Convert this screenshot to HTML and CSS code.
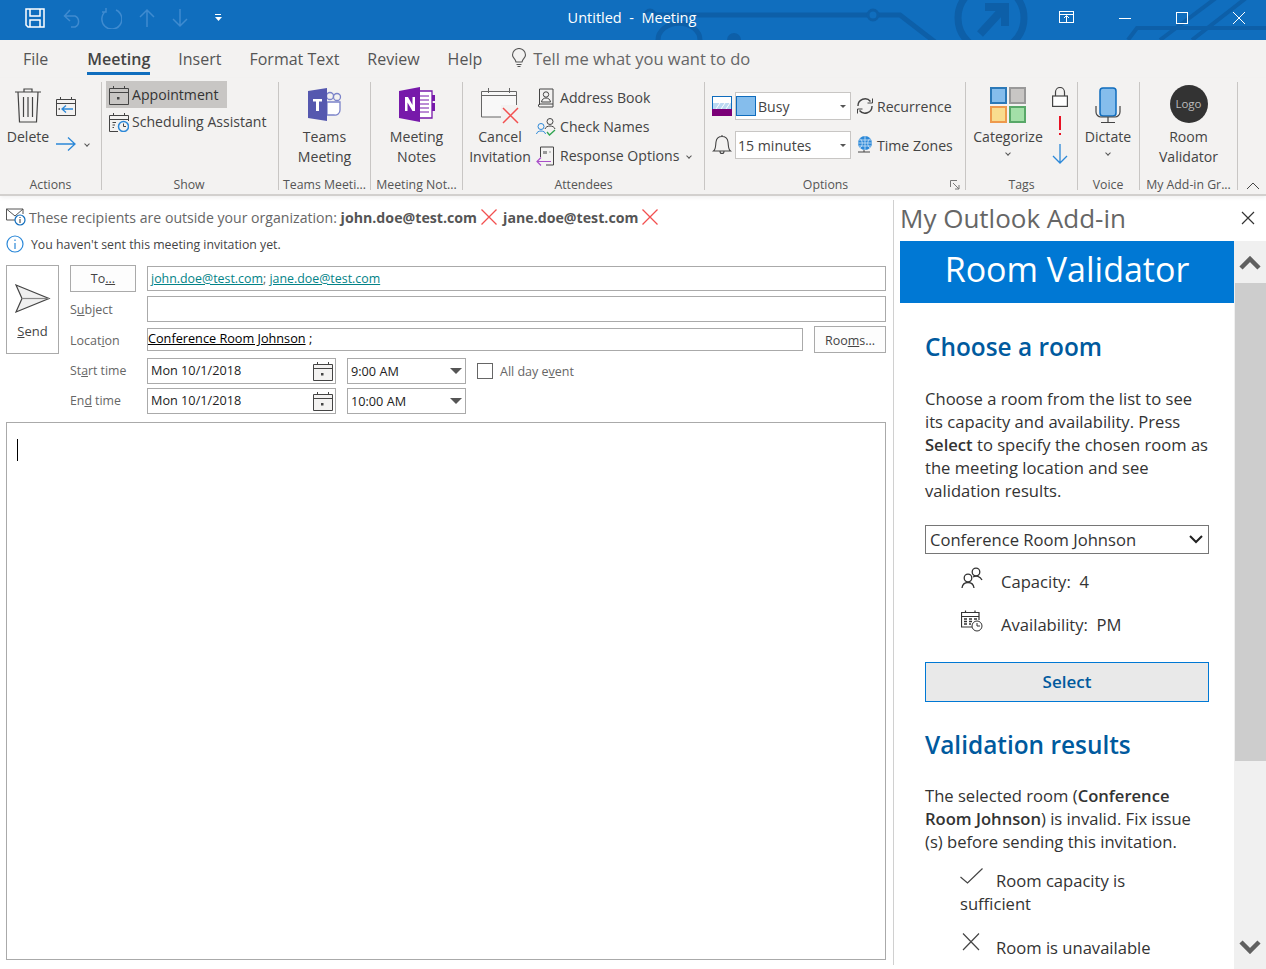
FILE: index.html
```html
<!DOCTYPE html>
<html lang="en">
<head>
    <meta charset="UTF-8">
    <title>Untitled - Meeting</title>
    <link rel="stylesheet" href="styles.css">
</head>
<body>
    <div class="titlebar">
        <svg class="circuit" width="1266" height="40" viewBox="0 0 1266 40" fill="none" stroke="#0d5fa8" stroke-width="5">
            <path d="M655 15H868M878 15H900L935 42"/>
            <circle cx="873" cy="15" r="5" stroke-width="3"/>
            <circle cx="650" cy="15" r="5" stroke-width="3"/>
            <path d="M658 40a20 16 0 0 1 42 0"/>
            <circle cx="734" cy="40" r="7" fill="#0d5fa8" stroke="none"/>
            <circle cx="991" cy="18" r="33" stroke-width="7"/>
            <path d="M980 34L1003 9M985 7H1005V26" stroke-width="8"/>
            <path d="M1128 40L1137 28H1266M1160 40L1220 -5M1192 40L1250 -5" stroke-width="4"/>
        </svg>
        <div class="qat">
            <svg width="22" height="22" viewBox="0 0 22 22" fill="none" stroke="#fff" stroke-width="1.5"><path d="M2 2H20V20H4L2 18Z"/><path d="M6 2V9H16V2M6 20V13H16V20"/></svg>
            <svg class="dim" width="20" height="20" viewBox="0 0 20 20" fill="none" stroke="#3f8bd0" stroke-width="1.5"><path d="M2 8H12A6 6 0 0 1 12 19H8M7 2L1.500 8L7 13"/></svg>
            <svg class="dim" width="22" height="22" viewBox="0 0 22 22" fill="none" stroke="#3f8bd0" stroke-width="1.5"><path d="M6 4A10 10 0 1 0 16 3M6 1V5H2"/></svg>
            <svg class="dim" width="16" height="20" viewBox="0 0 16 20" fill="none" stroke="#3f8bd0" stroke-width="1.500"><path d="M8 19V2M1 9L8 2L15 9"/></svg>
            <svg class="dim" width="16" height="20" viewBox="0 0 16 20" fill="none" stroke="#3f8bd0" stroke-width="1.500"><path d="M8 1V18M1 11L8 18L15 11"/></svg>
            <svg class="qat-more" width="8" height="8" viewBox="0 0 8 8" fill="#fff"><rect y="0" width="6" height="1"/><path d="M0 3H7L3.500 7Z"/></svg>
        </div>
        <div class="title">Untitled&nbsp; -&nbsp; Meeting</div>
        <div class="winctl">
            <svg width="16" height="14" viewBox="0 0 16 14" fill="none" stroke="#fff"><rect x=".5" y=".5" width="14" height="11"/><path d="M1 3.500H14M7.500 11V5M5 7L7.500 4.500L10 7"/></svg>
            <svg width="14" height="14" viewBox="0 0 14 14" fill="none" stroke="#fff"><path d="M1 7.500H13"/></svg>
            <svg width="14" height="14" viewBox="0 0 14 14" fill="none" stroke="#fff"><rect x="1.500" y="1.500" width="11" height="11"/></svg>
            <svg width="14" height="14" viewBox="0 0 14 14" fill="none" stroke="#fff"><path d="M1 1L13 13M13 1L1 13"/></svg>
        </div>
    </div>

    <div class="tabs">
        <span class="tab">File</span>
        <span class="tab active">Meeting</span>
        <span class="tab">Insert</span>
        <span class="tab">Format Text</span>
        <span class="tab">Review</span>
        <span class="tab">Help</span>
        <span class="tellme">
            <svg width="16" height="20" viewBox="0 0 16 20" fill="none" stroke="#555" stroke-width="1.100"><path d="M5 14C4 10 1.500 10 1.500 7A6.500 6.500 0 0 1 14.500 7C14.500 10 12 10 11 14ZM5.500 16.500H10.500M6.500 18.500H9.500"/></svg>
            Tell me what you want to do
        </span>
    </div>

    <div class="ribbon">
        <div class="group g-actions">
            <div class="group-body">
                <div class="big w-delete">
                    <div class="big-icon">
                        <svg width="28" height="36" viewBox="0 0 28 36" fill="none" stroke="#444" stroke-width="1.200"><path d="M1 5H27M10 5V2H18V5M4 5L5.500 35H22.500L24 5M9.500 10V30M14 10V30M18.500 10V30"/></svg>
                    </div>
                    <div class="big-text">Delete</div>
                </div>
                <div class="action-col">
                    <svg width="20" height="20" viewBox="0 0 20 20" fill="none" stroke="#444"><path d="M.500 3.500H19.500V19.500H.500ZM.500 7.500H19.500M4.500 1V4M15.500 1V4"/><path d="M17 13H6M10 9.500L6 13L10 16.500" stroke="#2b88d8" stroke-width="1.300"/><path d="M2.500 13H4" stroke-width="1.500"/></svg>
                    <div class="action-move">
                        <svg width="20" height="14" viewBox="0 0 20 14" fill="none" stroke="#2b88d8" stroke-width="1.300"><path d="M0 7H19M12 .5L19 7L12 13.500"/></svg>
                        <span class="chev"></span>
                    </div>
                </div>
            </div>
            <div class="group-label">Actions</div>
        </div>

        <div class="group g-show">
            <div class="group-body stack">
                <div class="small selected">
                    <svg width="20" height="20" viewBox="0 0 20 20" fill="none" stroke="#444"><path d="M.500 3.500H19.500V19.500H.500ZM.500 7.500H19.500M4.500 1V4M15.500 1V4"/><rect x="8" y="12" width="2.500" height="2.500" fill="#444" stroke="none"/></svg>
                    Appointment
                </div>
                <div class="small">
                    <svg width="20" height="20" viewBox="0 0 20 20" fill="none" stroke="#444"><path d="M9 19.500H.500V3.500H19.500V9M.500 7.500H19.500M4.500 1V4M15.500 1V4M3.500 10.500H7M3.500 13H6M3.500 15.500H5"/><circle cx="14.500" cy="14.500" r="5" fill="#f3f2f1" stroke="#2b88d8" stroke-width="1.500"/><path d="M14.500 11.500V14.500H17" stroke="#444"/></svg>
                    Scheduling Assistant
                </div>
            </div>
            <div class="group-label">Show</div>
        </div>

        <div class="group g-teams">
            <div class="group-body">
                <div class="big">
                    <div class="big-icon">
                        <svg width="34" height="33" viewBox="0 0 34 33" fill="none"><circle cx="22" cy="8" r="3.500" stroke="#7b83c9" stroke-width="1.300"/><circle cx="29" cy="9" r="3.500" stroke="#7b83c9" stroke-width="1.300"/><path d="M19 14H32V22A5 5 0 0 1 26 27H19Z" fill="#fff" stroke="#7b83c9" stroke-width="1.300"/><path d="M0 3L19 0V33L0 30Z" fill="#5558af"/><path d="M5 11H14V13.500H11V23H8V13.500H5Z" fill="#fff"/></svg>
                    </div>
                    <div class="big-text">Teams<br>Meeting</div>
                </div>
            </div>
            <div class="group-label">Teams Meeti...</div>
        </div>

        <div class="group g-notes">
            <div class="group-body">
                <div class="big">
                    <div class="big-icon">
                        <svg width="36" height="35" viewBox="0 0 36 35" fill="none"><path d="M20 4H33V31H20" fill="#fff" stroke="#7719aa" stroke-width="1.300"/><path d="M20 9H30M20 13H30M20 17H30M20 21H30M20 25H30" stroke="#7719aa"/><path d="M33 8H36V14H33ZM33 16H36V24H33Z" fill="#7719aa"/><path d="M0 4L21 0V35L0 31Z" fill="#7719aa"/><path d="M6 10H9L13.500 18V10H16V24H13.500L8.500 15.500V24H6Z" fill="#fff"/></svg>
                    </div>
                    <div class="big-text">Meeting<br>Notes</div>
                </div>
            </div>
            <div class="group-label">Meeting Not...</div>
        </div>

        <div class="group g-attendees">
            <div class="group-body">
                <div class="big w-cancel">
                    <div class="big-icon">
                        <svg width="38" height="38" viewBox="0 0 38 38" fill="none"><path d="M.500 5.500H35.500V31H.500Z" fill="#f8f8f8" stroke="#666"/><path d="M.500 9.500H35.500M7.500 2V7M28.500 2V7" stroke="#666"/><rect x="20" y="19" width="18" height="18" fill="#f3f2f1"/><path d="M22 22L37 37M37 22L22 37" stroke="#f25050" stroke-width="1.500"/></svg>
                    </div>
                    <div class="big-text">Cancel<br>Invitation</div>
                </div>
                <div class="small-col">
                    <div class="small tall">
                        <svg width="18" height="20" viewBox="0 0 18 20" fill="none" stroke="#444"><path d="M2.500 17V1H16V19H3.500A1.500 1.500 0 0 1 2.500 16H16"/><circle cx="9" cy="6.500" r="2.700"/><path d="M4.500 14C5 11 7 10 9 10C11 10 13 11 13.500 14Z"/></svg>
                        Address Book
                    </div>
                    <div class="small tall">
                        <svg class="wide" width="20" height="20" viewBox="0 0 20 20" fill="none"><circle cx="14" cy="4.500" r="3" stroke="#444"/><path d="M9 12C10 8 18 8 19 12" stroke="#444"/><circle cx="5" cy="9.500" r="3" stroke="#2b88d8"/><path d="M.500 17C1 13 9 13 9.500 17" stroke="#2b88d8"/><path d="M11 15L13.500 18L19 13" stroke="#2ea44f" stroke-width="1.300"/></svg>
                        Check Names
                    </div>
                    <div class="small tall">
                        <svg class="wide" width="20" height="20" viewBox="0 0 20 20" fill="none"><path d="M4.500 11V1H17.500V19H10" stroke="#444"/><path d="M7 5H11V8H7Z" fill="#999"/><path d="M13 6H15" stroke="#999"/><path d="M15 15.500H1M5 11.500L1 15.500L5 19.500" stroke="#a94fc9" stroke-width="1.200"/></svg>
                        Response Options
                        <span class="chev"></span>
                    </div>
                </div>
            </div>
            <div class="group-label">Attendees</div>
        </div>

        <div class="group g-options">
            <div class="group-body stack">
                <div class="opt-row first">
                    <svg class="opt-icon" width="20" height="20" viewBox="0 0 20 20"><rect x=".5" y=".5" width="19" height="19" fill="#fff" stroke="#0f6cbd"/><rect x="1" y="7" width="18" height="6" fill="#bcd9f2"/><path d="M4 13L8 7M9 13L13 7M14 13L18 7" stroke="#fff"/><rect y="13" width="20" height="7" fill="#7a0077"/></svg>
                    <div class="drop">
                        <span class="swatch"></span>Busy
                        <span class="drop-arrow"></span>
                    </div>
                    <svg class="opt-side" width="20" height="18" viewBox="0 0 20 18" fill="none" stroke="#444" stroke-width="1.400"><path d="M3 9A7 7 0 0 1 15.500 4.500M17 9A7 7 0 0 1 4.500 13.500"/><path d="M12.500 6H17.500V1.500M7.500 12H2.500V16.500" stroke-width="1"/></svg>
                    Recurrence
                </div>
                <div class="opt-row">
                    <svg class="opt-icon" width="20" height="22" viewBox="0 0 20 22" fill="none" stroke="#444" stroke-width="1.100"><path d="M1.500 17C4 15 3.500 11 4 8C4.500 4 7 2.500 10 2.500C13 2.500 15.500 4 16 8C16.500 11 16 15 18.500 17ZM8 17.500A2 2 0 0 0 12 17.500M10 1V2.500"/></svg>
                    <div class="drop">15 minutes<span class="drop-arrow"></span></div>
                    <svg class="opt-side" width="20" height="20" viewBox="0 0 20 20" fill="none"><circle cx="10" cy="8" r="7" fill="#2b88d8"/><path d="M3 8H17M10 1V15M5 3.500C8 6 8 11 5 13M15 3.500C12 6 12 11 15 13M4 5H16M4 11H16" stroke="#cfe5f7" stroke-width=".8"/><path d="M3 17H15M9 15V17" stroke="#444"/></svg>
                    Time Zones
                </div>
            </div>
            <div class="group-label">Options</div>
            <svg class="launcher" width="10" height="10" viewBox="0 0 10 10" fill="none" stroke="#777"><path d="M.500 7V.500H7M3 3L9 9M9 5V9H5"/></svg>
        </div>

        <div class="group g-tags">
            <div class="group-body">
                <div class="big w-categorize">
                    <div class="big-icon">
                        <svg width="36" height="36" viewBox="0 0 36 36"><rect x="1" y="1" width="15" height="15" fill="#85bdec" stroke="#2b79b8" stroke-width="2"/><rect x="20" y="1" width="15" height="15" fill="#c8c6c4" stroke="#999" stroke-width="2"/><rect x="1" y="20" width="15" height="15" fill="#f9dc8e" stroke="#ee9a4d" stroke-width="2"/><rect x="20" y="20" width="15" height="15" fill="#a3dfa8" stroke="#58a868" stroke-width="2"/></svg>
                    </div>
                    <div class="big-text">Categorize</div>
                    <span class="chev chev-big"></span>
                </div>
                <div class="tag-col">
                    <svg width="16" height="20" viewBox="0 0 16 20" fill="none" stroke="#444" stroke-width="1.200"><path d="M3.500 9V5A4.500 4.500 0 0 1 12.500 5V9"/><rect x=".6" y="9" width="14.800" height="10.400" fill="#fff"/></svg>
                    <div class="bang"></div>
                    <svg width="16" height="20" viewBox="0 0 16 20" fill="none" stroke="#2b88d8" stroke-width="1.300"><path d="M8 0V19M1 12L8 19L15 12"/></svg>
                </div>
            </div>
            <div class="group-label">Tags</div>
        </div>

        <div class="group g-voice">
            <div class="group-body">
                <div class="big">
                    <div class="big-icon">
                        <svg width="26" height="36" viewBox="0 0 26 36" fill="none"><rect x="5" y="1" width="16" height="28" rx="3" fill="#85bdec" stroke="#0f6cbd" stroke-width="1.500"/><path d="M1 19V25A5 5 0 0 0 6 30H20A5 5 0 0 0 25 25V19M13 30V35M6 35.500H20" stroke="#444" stroke-width="1.200"/></svg>
                    </div>
                    <div class="big-text">Dictate</div>
                    <span class="chev chev-big"></span>
                </div>
            </div>
            <div class="group-label">Voice</div>
        </div>

        <div class="group g-addin">
            <div class="group-body">
                <div class="big">
                    <div class="big-icon"><div class="logo">Logo</div></div>
                    <div class="big-text">Room<br>Validator</div>
                </div>
            </div>
            <div class="group-label">My Add-in Gr...</div>
        </div>

        <svg class="collapse" width="14" height="8" viewBox="0 0 14 8" fill="none" stroke="#444"><path d="M1 7L7 1L13 7"/></svg>
    </div>

    <div class="main">
        <div class="compose">
            <div class="notice">
                <svg width="20" height="18" viewBox="0 0 20 18" fill="none"><path d="M10 12H.500V1H17V6M.500 1L9 8L17 1" stroke="#555"/><circle cx="14" cy="12" r="5" fill="#fff" stroke="#0f6cbd" stroke-width="1.200"/><path d="M14 11V15M14 9V10" stroke="#333"/></svg>
                <span>These recipients are outside your organization: <b>john.doe@test.com</b></span>
                <svg class="red-x" width="16" height="16" viewBox="0 0 16 16" fill="none" stroke="#f25050" stroke-width="1.300"><path d="M.5 .5L15.500 15.500M15.500 .5L.5 15.500"/></svg>
                <b>jane.doe@test.com</b>
                <svg class="red-x" width="16" height="16" viewBox="0 0 16 16" fill="none" stroke="#f25050" stroke-width="1.300"><path d="M.5 .5L15.500 15.500M15.500 .5L.5 15.500"/></svg>
            </div>
            <div class="notice second">
                <svg width="18" height="18" viewBox="0 0 18 18" fill="none" stroke="#2b88d8" stroke-width="1.200"><circle cx="9" cy="9" r="8"/><path d="M9 8V14M9 4.500V6"/></svg>
                You haven't sent this meeting invitation yet.
            </div>

            <div class="form">
                <div class="send">
                    <svg width="36" height="30" viewBox="0 0 36 30" fill="#f0f0f0" stroke="#444" stroke-width="1.200"><path d="M1 1L34 14.500L1 28L7 14.500Z"/><path d="M7 14.500H34" fill="none" stroke="#888"/></svg>
                    <span><u>S</u>end</span>
                </div>
                <div class="fields">
                    <div class="row">
                        <div class="btn to-btn">To<u>...</u></div>
                        <div class="input recipients"><a>john.doe@test.com</a>; <a>jane.doe@test.com</a></div>
                    </div>
                    <div class="row r-subject">
                        <label>S<u>u</u>bject</label>
                        <div class="input"></div>
                    </div>
                    <div class="row r-location">
                        <label>Locat<u>i</u>on</label>
                        <div class="input loc"><span class="loc-text">Conference Room Johnson</span> ;</div>
                        <div class="btn rooms-btn">Roo<u>m</u>s...</div>
                    </div>
                    <div class="row r-start">
                        <label>St<u>a</u>rt time</label>
                        <div class="input date"><span>Mon 10/1/2018</span>
                            <svg width="20" height="20" viewBox="0 0 20 20" fill="#f3f2f1" stroke="#444"><path d="M.500 3.500H19.500V19.500H.500ZM.500 7.500H19.500M4.500 1V4M15.500 1V4"/><rect x="8" y="12" width="2.500" height="2.500" fill="#444" stroke="none"/></svg>
                        </div>
                        <div class="input time">9:00 AM<span class="time-arrow"></span></div>
                        <div class="check"></div>
                        <span class="allday">All day e<u>v</u>ent</span>
                    </div>
                    <div class="row r-end">
                        <label>En<u>d</u> time</label>
                        <div class="input date"><span>Mon 10/1/2018</span>
                            <svg width="20" height="20" viewBox="0 0 20 20" fill="#f3f2f1" stroke="#444"><path d="M.500 3.500H19.500V19.500H.500ZM.500 7.500H19.500M4.500 1V4M15.500 1V4"/><rect x="8" y="12" width="2.500" height="2.500" fill="#444" stroke="none"/></svg>
                        </div>
                        <div class="input time">10:00 AM<span class="time-arrow"></span></div>
                    </div>
                </div>
            </div>

            <div class="body-box"><div class="caret"></div></div>
        </div>

        <div class="pane">
            <div class="pane-head">
                <span>My Outlook Add-in</span>
                <svg width="14" height="14" viewBox="0 0 14 14" fill="none" stroke="#333" stroke-width="1.200"><path d="M1 1L13 13M13 1L1 13"/></svg>
            </div>
            <div class="pane-main">
                <div class="pane-content">
                    <div class="banner">Room Validator</div>
                    <div class="pane-inner">
                        <h2>Choose a room</h2>
                        <p class="para">Choose a room from the list to see<br>its capacity and availability. Press<br><b>Select</b> to specify the chosen room as<br>the meeting location and see<br>validation results.</p>
                        <div class="room-select">Conference Room Johnson
                            <svg width="14" height="9" viewBox="0 0 14 9" fill="none" stroke="#222" stroke-width="2"><path d="M1 1L7 7L13 1"/></svg>
                        </div>
                        <div class="info-row">
                            <svg width="22" height="22" viewBox="0 0 22 22" fill="none" stroke="#333" stroke-width="1.300"><circle cx="15" cy="5" r="3.800"/><path d="M12 10C15 8.500 19 9 21 13"/><circle cx="7" cy="11" r="3.800"/><path d="M1 21C1.500 17 4 15.500 7 15.500C10 15.500 12.500 17 13 21"/></svg>
                            <span>Capacity:&nbsp; 4</span>
                        </div>
                        <div class="info-row r-avail">
                            <svg width="22" height="22" viewBox="0 0 22 22" fill="none" stroke="#333"><path d="M11 17H.500V2.500H18V10M.500 6.500H18M4.500 .5V3M14 .5V3" stroke-width="1.200"/><path d="M3 9H6M8 9H11M13 9H16M3 11.500H6M8 11.500H11M3 14H6M8 14H10" stroke-width="1.300"/><circle cx="16" cy="16" r="5"/><path d="M16 13V16H19"/></svg>
                            <span>Availability:&nbsp; PM</span>
                        </div>
                        <div class="select-btn">Select</div>
                        <h2 class="h-results">Validation results</h2>
                        <p class="para p-results">The selected room (<b>Conference<br>Room Johnson</b>) is invalid. Fix issue<br>(s) before sending this invitation.</p>
                        <div class="result">
                            <svg width="23" height="16" viewBox="0 0 23 16" fill="none" stroke="#444" stroke-width="1.200"><path d="M.5 9L7.500 15L22.500 .5"/></svg>Room capacity is<br>sufficient
                        </div>
                        <div class="result r-second">
                            <svg width="23" height="18" viewBox="0 0 23 18" fill="none" stroke="#444" stroke-width="1.200"><path d="M3 .5L19 17M19 .5L3 17"/></svg>Room is unavailable
                        </div>
                    </div>
                </div>
                <div class="scrollbar">
                    <svg width="22" height="14" viewBox="0 0 22 14" fill="none" stroke="#606060" stroke-width="4.500"><path d="M2 12L11 3L20 12"/></svg>
                    <div class="thumb"></div>
                    <svg class="sb-down" width="22" height="14" viewBox="0 0 22 14" fill="none" stroke="#606060" stroke-width="4.500"><path d="M2 2L11 11L20 2"/></svg>
                </div>
            </div>
        </div>
    </div>
</body>
</html>
```
FILE: styles.css
```css
* {
    box-sizing: border-box;
}

html, body {
    margin: 0;
    padding: 0;
    height: 969px;
    overflow: hidden;
}

body {
    font-family: 'Open Sans', 'Noto Sans', sans-serif;
    background-color: #fff;
    color: #444;
    display: flex;
    flex-direction: column;
}

svg {
    display: block;
    flex: none;
}

/* title bar */
.titlebar {
    height: 40px;
    background-color: #106ebe;
    position: relative;
    display: flex;
    align-items: center;
    flex: none;
    overflow: hidden;
    padding-bottom: 4px;
}

.circuit {
    position: absolute;
    left: 0;
    top: 0;
}

.qat {
    position: relative;
    display: flex;
    align-items: center;
    padding-left: 24px;
    gap: 17px;
    width: 400px;
}

.qat-more {
    margin-left: 10px;
}

.title {
    position: relative;
    width: 464px;
    margin-top: -1px;
    text-align: center;
    color: #fff;
    font-size: 14.500px;
}

.winctl {
    position: relative;
    margin-left: auto;
    display: flex;
    align-items: center;
    gap: 43px;
    padding-right: 20px;
}

/* tabs */
.tabs {
    height: 38px;
    flex: none;
    background-color: #f3f2f1;
    display: flex;
    align-items: center;
    padding-left: 23px;
    gap: 28px;
    font-size: 16px;
    color: #555;
}

.tab {
    position: relative;
    line-height: 38px;
}

.tab.active {
    font-weight: 600;
    color: #444;
    margin-left: 11px;
}

.tab.active::after {
    content: "";
    position: absolute;
    left: 0;
    right: 0;
    bottom: 3px;
    height: 3px;
    background-color: #106ebe;
}

.tellme {
    display: flex;
    align-items: center;
    gap: 6px;
    color: #666;
    font-size: 16.500px;
    margin-left: 1px;
    padding-bottom: 2px;
}

/* ribbon */
.ribbon {
    height: 118px;
    flex: none;
    background-color: #f3f2f1;
    border-bottom: 2px solid #d2d0ce;
    display: flex;
    position: relative;
    padding-top: 4px;
    box-shadow: 0 2px 4px rgba(0, 0, 0, 0.06);
    z-index: 1;
    font-size: 14.100px;
}

.group {
    height: 108px;
    display: flex;
    flex-direction: column;
    border-right: 1px solid #c8c6c4;
    position: relative;
    flex: none;
}

.group-body {
    flex: 1;
    display: flex;
}

.group-body.stack {
    flex-direction: column;
}

.group-label {
    height: 14px;
    line-height: 14px;
    margin-bottom: -2px;
    text-align: center;
    font-size: 12.300px;
    color: #555;
    white-space: nowrap;
}

.g-actions { width: 102px; }
.g-show { width: 177px; padding-left: 4px; }
.g-show .group-label { padding-right: 6px; }
.g-teams { width: 92px; }
.g-notes { width: 92px; }
.g-attendees { width: 242px; }
.g-options { width: 261px; padding-left: 7px; }
.g-options .group-label { padding-right: 26px; }
.g-tags { width: 112px; }
.g-voice { width: 62px; padding-right: 1px; }
.g-addin { width: 98px; }

.big {
    flex: 1;
    display: flex;
    flex-direction: column;
    align-items: center;
    text-align: center;
    line-height: 20px;
    white-space: nowrap;
}

.big-icon {
    height: 45px;
    display: flex;
    align-items: center;
    justify-content: center;
}

.w-delete {
    flex: none;
    width: 56px;
}

.w-cancel {
    flex: none;
    width: 74px;
}

.w-categorize {
    flex: none;
    width: 84px;
}

.action-col {
    padding-top: 14px;
}

.action-move {
    display: flex;
    align-items: center;
    gap: 6px;
    margin-top: 21px;
}

.chev {
    display: inline-block;
    width: 4px;
    height: 4px;
    border-right: 1px solid #555;
    border-bottom: 1px solid #555;
    transform: rotate(45deg);
    margin-left: 3px;
}

.chev-big {
    margin: 4px 0 0;
}

.small {
    height: 27px;
    display: flex;
    align-items: center;
    gap: 3px;
    padding: 0 3px;
    white-space: nowrap;
}

.small.selected {
    background-color: #c8c6c4;
    width: 121px;
    margin-top: -1px;
    color: #333;
}

.small-col {
    padding-top: 1px;
}

.small.tall {
    height: 29px;
    gap: 5px;
    padding: 0;
}

.small .wide {
    margin: 0 -1px;
}

.opt-row {
    display: flex;
    align-items: center;
    height: 28px;
    margin-top: 11px;
    white-space: nowrap;
}

.opt-row.first {
    margin-top: 10px;
}

.opt-icon {
    margin-right: 3px;
}

.opt-side {
    margin: 0 2px 0 4px;
}

.drop {
    width: 116px;
    height: 28px;
    background-color: #fff;
    border: 1px solid #c8c6c4;
    display: flex;
    align-items: center;
    padding-left: 2px;
    color: #444;
    position: relative;
}

.swatch {
    width: 20px;
    height: 20px;
    background-color: #85bdec;
    border: 1px solid #0f6cbd;
    margin: 0 2px 0 -2px;
}

.drop-arrow {
    margin-left: auto;
    margin-right: 4px;
    border-left: 3px solid transparent;
    border-right: 3px solid transparent;
    border-top: 3px solid #555;
}

.launcher {
    position: absolute;
    right: 5px;
    bottom: 0;
}

.tag-col {
    margin-left: 2px;
    padding-top: 5px;
    display: flex;
    flex-direction: column;
    align-items: center;
}

.bang {
    width: 2px;
    height: 19px;
    margin: 9px 0 9px;
    background: linear-gradient(#e81123 14px, transparent 14px, transparent 17px, #e81123 17px);
}

.logo {
    width: 38px;
    height: 38px;
    border-radius: 50%;
    background-color: #333;
    color: #bbb;
    font-size: 11.500px;
    line-height: 38px;
    margin-bottom: 2px;
}

.collapse {
    position: absolute;
    right: 6px;
    bottom: 4px;
}

/* compose form */
.main {
    flex: 1;
    display: flex;
    min-height: 0;
}

.compose {
    width: 893px;
    flex: none;
    padding: 11px 7px 0 6px;
    display: flex;
    flex-direction: column;
}

.notice {
    display: flex;
    align-items: center;
    gap: 3px;
    height: 20px;
    font-size: 14.100px;
    color: #666;
    white-space: nowrap;
}

.notice b {
    font-weight: 700;
    font-size: 14.200px;
    color: #555;
}

.red-x {
    margin: 0 3px 0 1px;
}

.notice.second {
    margin-top: 7px;
    color: #444;
    font-size: 12.300px;
    gap: 7px;
}

.form {
    display: flex;
    margin-top: 11px;
}

.send {
    width: 53px;
    height: 89px;
    border: 1px solid #aaa;
    display: flex;
    flex-direction: column;
    align-items: center;
    padding-top: 18px;
    gap: 8px;
    font-size: 13px;
    margin-right: 11px;
}

.fields {
    flex: 1;
    font-size: 12.800px;
}

.row {
    display: flex;
    align-items: center;
}

.r-subject { margin-top: 4px; }
.r-location { margin-top: 4px; }
.r-start { margin-top: 5px; }
.r-end { margin-top: 4px; }

.row label {
    width: 77px;
    color: #666;
    font-size: 12.500px;
}

.r-location label {
    padding-top: 2px;
}

.r-start label, .r-end label {
    font-size: 12.300px;
    padding-bottom: 1px;
}

.btn {
    height: 27px;
    border: 1px solid #aaa;
    background-color: #fdfdfd;
    display: flex;
    align-items: center;
    justify-content: center;
    font-size: 12.500px;
}

.rooms-btn {
    width: 72px;
    margin-left: 11px;
    padding-top: 1px;
}

.to-btn {
    width: 66px;
    margin-right: 11px;
}

.input {
    border: 1px solid #aaa;
    height: 26px;
    flex: 1;
    display: flex;
    align-items: center;
    padding-left: 3px;
    color: #222;
    white-space: pre;
}

.recipients {
    height: 25px;
    color: #666;
    font-size: 12.400px;
    padding-bottom: 1px;
}

.recipients a {
    color: #038387;
    text-decoration: underline;
}

.loc {
    height: 23px;
    padding-left: 0;
    padding-bottom: 3px;
    color: #000;
    font-size: 12.700px;
}

.loc-text {
    text-decoration: underline;
}

.date {
    flex: none;
    width: 189px;
    justify-content: space-between;
    padding-right: 2px;
    white-space: nowrap;
}

.date span, .time {
    font-size: 12.700px;
}

.date span {
    padding-bottom: 2px;
}

.time {
    flex: none;
    width: 119px;
    margin-left: 11px;
    padding-bottom: 1px;
}

.time-arrow {
    margin-left: auto;
    margin-right: 3px;
    border-left: 6px solid transparent;
    border-right: 6px solid transparent;
    border-top: 6px solid #555;
}

.check {
    width: 16px;
    height: 16px;
    border: 1px solid #666;
    margin: 0 7px 0 11px;
}

.allday {
    color: #666;
    font-size: 12.500px;
}

.body-box {
    flex: 1;
    margin: 8px 0 9px;
    border: 1px solid #aaa;
    padding: 16px 10px;
}

.caret {
    width: 1px;
    height: 22px;
    background-color: #000;
}

/* add-in pane */
.pane {
    flex: 1;
    margin-top: 4px;
    min-width: 0;
    display: flex;
    flex-direction: column;
    border-left: 1px solid #d0d0d0;
    margin-bottom: 4px;
}

.pane-head {
    height: 41px;
    flex: none;
    display: flex;
    align-items: center;
    justify-content: space-between;
    padding: 0 11px 5px 6px;
    font-size: 26px;
    color: #666;
    background-color: #fff;
}

.pane-main {
    flex: 1;
    display: flex;
    margin-bottom: -4px;
    min-height: 0;
}

.pane-content {
    flex: 1;
    min-width: 0;
    padding-left: 6px;
    overflow: hidden;
}

.banner {
    height: 62px;
    background-color: #0078d4;
    color: #fff;
    font-size: 34px;
    line-height: 56px;
    text-align: center;
}

.pane-inner {
    padding: 0 25px;
    font-size: 16.600px;
    line-height: 23px;
    color: #333;
}

.pane-inner h2 {
    margin: 27px 0 0;
    font-size: 24.400px;
    line-height: 34px;
    font-weight: 600;
    color: #005a9e;
    white-space: nowrap;
}

.pane-inner .h-results {
    margin-top: 26px;
}

.para {
    margin: 23px 0 0;
    white-space: nowrap;
}

.para b {
    font-weight: 600;
}

.p-results {
    margin-top: 22px;
}

.room-select {
    margin-top: 23px;
    height: 29px;
    border: 1px solid #767676;
    display: flex;
    align-items: center;
    justify-content: space-between;
    padding: 0 5px 0 4px;
    white-space: nowrap;
}

.info-row {
    display: flex;
    align-items: center;
    height: 24px;
    margin-top: 15px;
    padding-left: 36px;
    white-space: nowrap;
}

.info-row svg {
    margin-right: 18px;
    margin-top: -6px;
}

.r-avail {
    margin-top: 19px;
}

.select-btn {
    margin-top: 26px;
    height: 40px;
    border: 1px solid #0078d4;
    background-color: #e9e9e9;
    color: #005a9e;
    font-weight: 600;
    font-size: 17px;
    padding-bottom: 2px;
    display: flex;
    align-items: center;
    justify-content: center;
}

.result {
    margin-top: 15px;
    padding-left: 35px;
    white-space: nowrap;
}

.result svg {
    display: inline-block;
    margin-right: 13px;
    vertical-align: 3px;
}

.r-second {
    margin-top: 18px;
}

.scrollbar {
    width: 32px;
    flex: none;
    background-color: #f0f0f0;
    display: flex;
    flex-direction: column;
    align-items: center;
    padding-top: 15px;
    position: relative;
}

.thumb {
    align-self: stretch;
    margin: 13px 0 0 1px;
    height: 478px;
    background-color: #cdcdcd;
}

.sb-down {
    margin-top: auto;
    margin-bottom: 15px;
}
```
